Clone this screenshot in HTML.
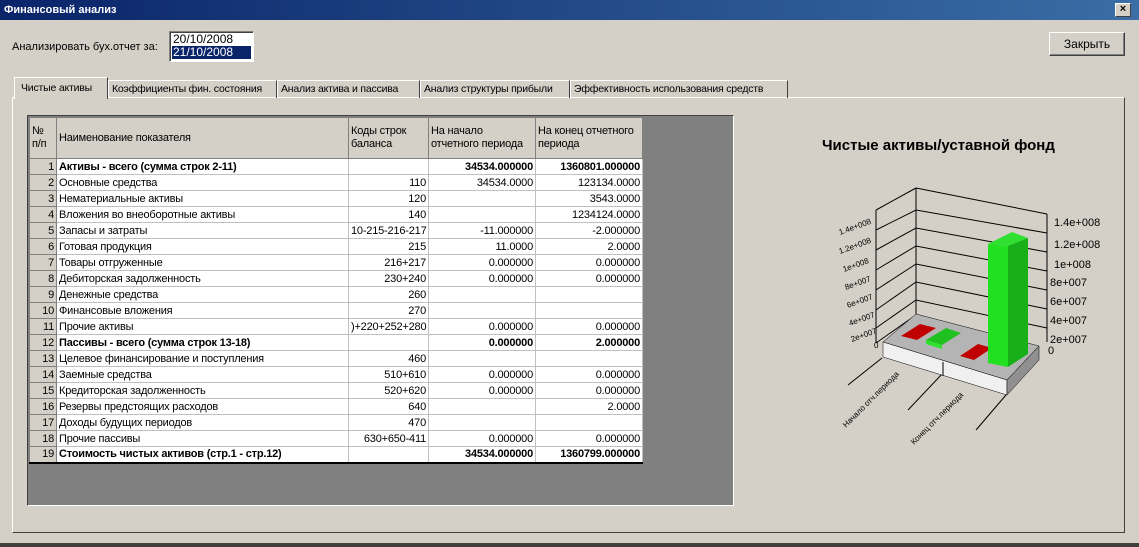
<!DOCTYPE html>
<html><head><meta charset="utf-8"><style>
*{box-sizing:border-box}
body{margin:0;width:1139px;height:547px;background:#d4d0c8;font-family:"Liberation Sans","DejaVu Sans",sans-serif;font-size:11px;color:#000;position:relative;overflow:hidden}
.abs{position:absolute}
.title{left:0;top:0;width:1139px;height:20px;background:linear-gradient(90deg,#0a246a,#3a6ea5);color:#fff;font-weight:bold;font-size:11px;line-height:20px;padding-left:4px}
.xbtn{left:1115px;top:3px;width:16px;height:14px;background:#d4d0c8;border:1px solid;border-color:#fff #404040 #404040 #fff;color:#000;font-size:11px;line-height:11px;text-align:center;font-weight:bold}
.list{left:169px;top:31px;width:85px;height:31px;background:#fff;border:1px solid;border-color:#808080 #fff #fff #808080;box-shadow:inset 1px 1px 0 #404040;font-size:12px;padding:1px 2px}
.list div{height:13px;line-height:13px;padding-left:1px}
.btn{left:1049px;top:32px;width:76px;height:24px;border:1px solid;border-color:#fff #404040 #404040 #fff;box-shadow:inset -1px -1px 0 #808080;text-align:center;line-height:22px;font-size:12px}
.panel{left:12px;top:97px;width:1113px;height:436px;border:1px solid;border-color:#fff #404040 #404040 #fff}
.tab{top:80px;height:18px;border:1px solid;border-bottom:none;border-color:#fff #404040 #fff #fff;line-height:16px;padding-left:3px;white-space:nowrap;font-size:10.5px;letter-spacing:-0.2px}
.grid{left:27px;top:115px;width:707px;height:391px;background:#808080;border:1px solid;border-color:#404040 #fff #fff #404040}
table{position:absolute;left:1px;top:1px;border-collapse:collapse;background:#fff;font-size:11px;table-layout:fixed;width:613px}
td{border:1px solid #c0c0c0;height:16px;padding:0 2px;white-space:nowrap;overflow:hidden;line-height:14px;letter-spacing:-0.2px}
td.n{background:#d4d0c8;text-align:right;border-color:#808080}
tr.h td{background:#d4d0c8;height:41px;vertical-align:middle;line-height:13px;border-color:#808080}
.r{text-align:right}
.b{font-weight:bold}
</style></head><body>
<div class="abs title">Финансовый анализ</div>
<div class="abs xbtn">×</div>
<div class="abs" style="left:12px;top:41px;font-size:11px">Анализировать бух.отчет за:</div>
<div class="abs list"><div>20/10/2008</div><div style="background:#0a246a;color:#fff">21/10/2008</div></div>
<div class="abs btn">Закрыть</div>
<div class="abs panel"></div>
<div class="abs tab" style="left:108px;width:169px">Коэффициенты фин. состояния</div>
<div class="abs tab" style="left:277px;width:143px">Анализ актива и пассива</div>
<div class="abs tab" style="left:420px;width:150px">Анализ структуры прибыли</div>
<div class="abs tab" style="left:570px;width:218px">Эффективность использования средств</div>
<div class="abs tab" style="left:14px;top:77px;width:94px;height:22px;background:#d4d0c8;line-height:20px;padding-left:6px">Чистые активы</div>
<div class="abs grid">
<table>
<colgroup><col style="width:27px"><col style="width:292px"><col style="width:80px"><col style="width:107px"><col style="width:107px"></colgroup>
<tr class="h"><td style="text-align:left">№<br>п/п</td><td>Наименование показателя</td><td>Коды строк<br>баланса</td><td>На начало<br>отчетного периода</td><td>На конец отчетного<br>периода</td></tr>
<tr class="b"><td class="n" style="font-weight:normal">1</td><td>Активы - всего (сумма строк 2-11)</td><td></td><td class="r">34534.000000</td><td class="r">1360801.000000</td></tr>
<tr><td class="n">2</td><td>Основные средства</td><td class="r">110</td><td class="r">34534.0000</td><td class="r">123134.0000</td></tr>
<tr><td class="n">3</td><td>Нематериальные активы</td><td class="r">120</td><td></td><td class="r">3543.0000</td></tr>
<tr><td class="n">4</td><td>Вложения во внеоборотные активы</td><td class="r">140</td><td></td><td class="r">1234124.0000</td></tr>
<tr><td class="n">5</td><td>Запасы и затраты</td><td class="r">10-215-216-217</td><td class="r">-11.000000</td><td class="r">-2.000000</td></tr>
<tr><td class="n">6</td><td>Готовая продукция</td><td class="r">215</td><td class="r">11.0000</td><td class="r">2.0000</td></tr>
<tr><td class="n">7</td><td>Товары отгруженные</td><td class="r">216+217</td><td class="r">0.000000</td><td class="r">0.000000</td></tr>
<tr><td class="n">8</td><td>Дебиторская задолженность</td><td class="r">230+240</td><td class="r">0.000000</td><td class="r">0.000000</td></tr>
<tr><td class="n">9</td><td>Денежные средства</td><td class="r">260</td><td></td><td></td></tr>
<tr><td class="n">10</td><td>Финансовые вложения</td><td class="r">270</td><td></td><td></td></tr>
<tr><td class="n">11</td><td>Прочие активы</td><td class="r">)+220+252+280</td><td class="r">0.000000</td><td class="r">0.000000</td></tr>
<tr class="b"><td class="n" style="font-weight:normal">12</td><td>Пассивы - всего (сумма строк 13-18)</td><td></td><td class="r">0.000000</td><td class="r">2.000000</td></tr>
<tr><td class="n">13</td><td>Целевое финансирование и поступления</td><td class="r">460</td><td></td><td></td></tr>
<tr><td class="n">14</td><td>Заемные средства</td><td class="r">510+610</td><td class="r">0.000000</td><td class="r">0.000000</td></tr>
<tr><td class="n">15</td><td>Кредиторская задолженность</td><td class="r">520+620</td><td class="r">0.000000</td><td class="r">0.000000</td></tr>
<tr><td class="n">16</td><td>Резервы предстоящих расходов</td><td class="r">640</td><td></td><td class="r">2.0000</td></tr>
<tr><td class="n">17</td><td>Доходы будущих периодов</td><td class="r">470</td><td></td><td></td></tr>
<tr><td class="n">18</td><td>Прочие пассивы</td><td class="r">630+650-411</td><td class="r">0.000000</td><td class="r">0.000000</td></tr>
<tr class="b" style="border-bottom:2px solid #000"><td class="n" style="font-weight:normal">19</td><td>Стоимость чистых активов (стр.1 - стр.12)</td><td></td><td class="r">34534.000000</td><td class="r">1360799.000000</td></tr>
</table>
</div>
<div class="abs" style="left:822px;top:137px;font-size:15px;font-weight:bold">Чистые активы/уставной фонд</div>
<svg class="abs" style="left:780px;top:180px" width="340" height="280" viewBox="0 0 340 280">
<g stroke="#000" stroke-width="1" fill="none">
<line x1="136" y1="8" x2="136" y2="135"/>
<line x1="96" y1="30" x2="96" y2="163"/>
<line x1="136" y1="8" x2="267" y2="34"/>
<line x1="267" y1="34" x2="267" y2="162"/>
<polyline points="96,30 136,8"/><polyline points="96,50 136,30 267,53"/><polyline points="96,70 136,48 267,72"/><polyline points="96,90 136,66 267,91"/><polyline points="96,110 136,84 267,110"/><polyline points="96,130 136,102 267,129"/><polyline points="96,148 136,120 267,148"/><polyline points="96,163 136,135"/>
<line x1="68" y1="205" x2="102" y2="178"/><line x1="128" y1="230" x2="163" y2="193"/><line x1="196" y1="250" x2="232" y2="208"/>
</g>
<polygon points="103,162 136,134 259,166 227,200" fill="#b4b4b4" stroke="#000" stroke-width=".5"/>
<polygon points="103,162 227,200 227,215 103,177" fill="#f0f0f0" stroke="#000" stroke-width=".5"/>
<polygon points="227,200 259,166 259,180 227,215" fill="#909090" stroke="#000" stroke-width=".5"/>
<line x1="163" y1="182" x2="163" y2="196" stroke="#000"/>
<polygon points="121,156 140,144 156,148 137,160" fill="#c00000"/>
<polygon points="146,160 166,148 181,153 162,165" fill="#20c020"/>
<polygon points="146,160 162,165 162,169 146,164" fill="#30e030"/>
<polygon points="180,176 198,164 212,168 194,180" fill="#c00000"/>
<polygon points="208,64 232,52 248,58 228,66" fill="#30e030"/>
<polygon points="208,64 228,66 228,187 208,183" fill="#20e020"/>
<polygon points="228,66 248,58 248,174 228,187" fill="#18b018"/>
<g font-size="11" font-family="Liberation Sans,sans-serif" fill="#000">
<text x="274" y="46">1.4e+008</text><text x="274" y="68">1.2e+008</text><text x="274" y="88">1e+008</text><text x="270" y="106">8e+007</text><text x="270" y="125">6e+007</text><text x="270" y="144">4e+007</text><text x="270" y="163">2e+007</text><text x="268" y="174">0</text>
</g>
<g font-size="8" font-family="Liberation Sans,sans-serif" fill="#000">
<text transform="translate(60,55) rotate(-20)">1.4e+008</text><text transform="translate(60,74) rotate(-20)">1.2e+008</text><text transform="translate(64,92) rotate(-20)">1e+008</text><text transform="translate(66,110) rotate(-20)">8e+007</text><text transform="translate(68,128) rotate(-20)">6e+007</text><text transform="translate(70,146) rotate(-20)">4e+007</text><text transform="translate(72,162) rotate(-20)">2e+007</text><text x="94" y="168">0</text>
<text transform="translate(66,248) rotate(-45)">Начало отч.периода</text>
<text transform="translate(134,265) rotate(-45)">Конец отч.периода</text>
</g>
</svg>
<div class="abs" style="left:0;top:543px;width:1139px;height:4px;background:#404040"></div>
</body></html>
